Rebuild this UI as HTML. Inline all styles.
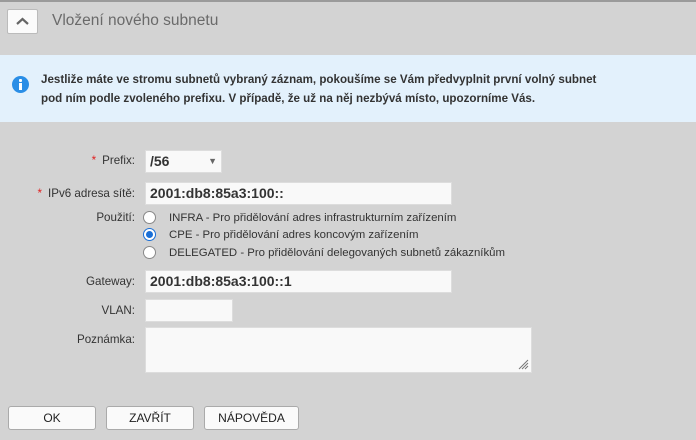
<!DOCTYPE html>
<html><head><meta charset="utf-8"><style>
*{box-sizing:border-box;margin:0;padding:0}
body{width:696px;height:440px;background:#d3d3d3;font-family:"Liberation Sans",sans-serif;position:relative;overflow:hidden;color:#333;font-size:12px}
.a{position:absolute}
.topline{left:0;top:0;width:696px;height:2px;background:#9a9a9a}
.cbtn{left:7px;top:9px;width:31px;height:25px;background:#fbfbfb;border:1px solid #bbb;border-radius:2px}
.title{left:52px;top:12px;font-size:15.5px;color:#6a6a6a}
.info{left:0;top:55px;width:696px;height:67px;background:#e3f1fc}
.icon{left:12px;top:76px;width:17px;height:17px;border-radius:50%;background:#2a8ee6}
.txt{left:41px;top:70px;font-size:11.6px;font-weight:bold;line-height:19px;color:#333}
.lbl{text-align:right;width:135px;left:0;font-size:11.6px;color:#333}
.req{color:#e02020;margin-right:6px}
.in{background:#f9f9f9;border:1px solid #ddd;font-weight:bold;font-size:14px;padding-left:4px;line-height:21px}
.radio{width:13px;height:13px;border-radius:50%;border:1px solid #888;background:#fff;left:143px}
.rt{left:169px;font-size:11.4px;color:#333}
.btn{top:406px;height:24px;background:#fafafa;border:1px solid #aaa;border-radius:3px;text-align:center;line-height:22px;font-size:12px;color:#222}
</style></head><body>
<div class="a topline"></div>
<div class="a cbtn"><svg width="29" height="23"><path d="M9 14 L14.5 9 L20 14" stroke="#666" stroke-width="2.2" fill="none"/></svg></div>
<div class="a title">Vložení nového subnetu</div>
<div class="a info"></div>
<div class="a icon"><div style="position:absolute;left:7px;top:3px;width:3px;height:3px;background:#fff;border-radius:1px"></div><div style="position:absolute;left:7px;top:7px;width:3px;height:7px;background:#fff"></div></div>
<div class="a txt">Jestliže máte ve stromu subnetů vybraný záznam, pokoušíme se Vám předvyplnit první volný subnet<br>pod ním podle zvoleného prefixu. V případě, že už na něj nezbývá místo, upozorníme Vás.</div>

<div class="a lbl" style="top:154px"><span class="req">*</span>Prefix:</div>
<div class="a in" style="left:145px;top:150px;width:77px;height:23px">/56<span style="position:absolute;right:4px;top:0;font-size:9px;color:#666">▼</span></div>

<div class="a lbl" style="top:187px"><span class="req">*</span>IPv6 adresa sítě:</div>
<div class="a in" style="left:145px;top:182px;width:307px;height:23px">2001:db8:85a3:100::</div>

<div class="a lbl" style="top:211px">Použití:</div>
<div class="a radio" style="top:211px"></div>
<div class="a rt" style="top:212px">INFRA - Pro přidělování adres infrastrukturním zařízením</div>
<div class="a radio" style="top:228px;border-color:#1a6fd6"><div style="position:absolute;left:2px;top:2px;width:7px;height:7px;border-radius:50%;background:#1a6fd6"></div></div>
<div class="a rt" style="top:229px">CPE - Pro přidělování adres koncovým zařízením</div>
<div class="a radio" style="top:246px"></div>
<div class="a rt" style="top:247px">DELEGATED - Pro přidělování delegovaných subnetů zákazníkům</div>

<div class="a lbl" style="top:275px">Gateway:</div>
<div class="a in" style="left:145px;top:270px;width:307px;height:23px">2001:db8:85a3:100::1</div>

<div class="a lbl" style="top:304px">VLAN:</div>
<div class="a in" style="left:145px;top:299px;width:88px;height:23px"></div>

<div class="a lbl" style="top:333px">Poznámka:</div>
<div class="a in" style="left:145px;top:327px;width:387px;height:46px"><svg style="position:absolute;right:2px;bottom:2px" width="12" height="12"><path d="M11 2L2 11M11 5L5 11M11 8L8 11" stroke="#777" stroke-width="1"/></svg></div>

<div class="a btn" style="left:8px;width:88px">OK</div>
<div class="a btn" style="left:106px;width:88px">ZAVŘÍT</div>
<div class="a btn" style="left:204px;width:95px">NÁPOVĚDA</div>
</body></html>
